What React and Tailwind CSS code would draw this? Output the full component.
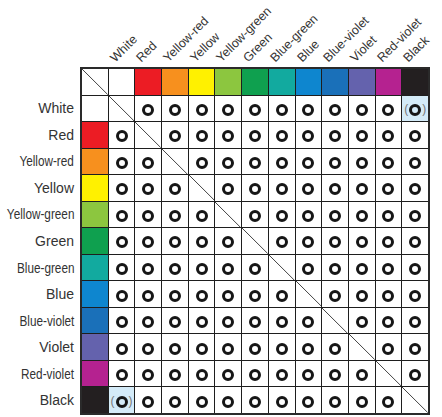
const COLORS = [
  { name: "White", bg: "bg-white", narrow: false },
  { name: "Red", bg: "bg-[#ec1c24]", narrow: false },
  { name: "Yellow-red", bg: "bg-[#f7901e]", narrow: true },
  { name: "Yellow", bg: "bg-[#fff100]", narrow: false },
  { name: "Yellow-green", bg: "bg-[#8cc63f]", narrow: true },
  { name: "Green", bg: "bg-[#0fa04f]", narrow: false },
  { name: "Blue-green", bg: "bg-[#12aa9f]", narrow: true },
  { name: "Blue", bg: "bg-[#0e86cf]", narrow: false },
  { name: "Blue-violet", bg: "bg-[#1a70b9]", narrow: true },
  { name: "Violet", bg: "bg-[#6462ad]", narrow: false },
  { name: "Red-violet", bg: "bg-[#b52290]", narrow: true },
  { name: "Black", bg: "bg-[#231f20]", narrow: false },
];

const font = { fontFamily: '"Liberation Sans", Arial, sans-serif' };

function Ring() {
  return <div className="h-[12px] w-[12px] rounded-full border-[3px] border-[#161616]" />;
}

function Diagonal() {
  return (
    <svg className="h-full w-full" viewBox="0 0 10 10" preserveAspectRatio="none">
      <line x1="0" y1="0" x2="10" y2="10" stroke="#444" strokeWidth="1" vectorEffect="non-scaling-stroke" />
    </svg>
  );
}

function BodyCell({ i, j }) {
  if (i === j) {
    return (
      <div className="bg-white">
        <Diagonal />
      </div>
    );
  }
  const special = (i === 0 && j === 11) || (i === 11 && j === 0);
  if (special) {
    return (
      <div className="flex items-center justify-center gap-[1px] bg-[#d4ebf8] pt-[3px] text-[12px] leading-none text-[#777]">
        <span className="-mt-[1px]">(</span>
        <Ring />
        <span className="-mt-[1px]">)</span>
      </div>
    );
  }
  return (
    <div className="flex items-center justify-center bg-white pt-[3px]">
      <Ring />
    </div>
  );
}

export default function App() {
  return (
    <div className="h-[417px] w-[442px] overflow-hidden bg-white text-[#333]" style={font}>
      {/* rotated column headers */}
      <div className="flex h-[67px]">
        <div className="w-[80px] shrink-0" />
        <div className="grid w-[350px] grid-cols-13 gap-px px-[2px]">
          <div />
          {COLORS.map((c) => (
            <div key={c.name} className="relative">
              <span className="absolute bottom-[3px] left-[8px] origin-bottom-left -rotate-45 whitespace-nowrap text-[12.5px] leading-none">
                {c.name}
              </span>
            </div>
          ))}
        </div>
      </div>

      <div className="flex">
        {/* row labels */}
        <div className="grid h-[348px] w-[80px] shrink-0 grid-cols-1 grid-rows-13 gap-px py-[2px] pr-[6px]">
          <div />
          {COLORS.map((c) => (
            <div key={c.name} className="flex min-w-0 items-center justify-end">
              {c.narrow ? (
                <span className="inline-block shrink-0 origin-right whitespace-nowrap text-[14px] leading-none [transform:scaleX(0.84)]">
                  {c.name}
                </span>
              ) : (
                <span className="shrink-0 whitespace-nowrap text-[14px] leading-none">{c.name}</span>
              )}
            </div>
          ))}
        </div>

        {/* matrix */}
        <div className="grid h-[348px] w-[350px] grid-cols-13 grid-rows-13 gap-px border-2 border-[#2a2a2a] bg-[#1e1e1e]">
          <div className="bg-white">
            <Diagonal />
          </div>
          {COLORS.map((c) => (
            <div key={c.name} className={c.bg} />
          ))}
          {COLORS.map((row, i) => [
            <div key={row.name + "-sw"} className={row.bg} />,
            ...COLORS.map((col, j) => <BodyCell key={row.name + col.name} i={i} j={j} />),
          ])}
        </div>
      </div>
    </div>
  );
}
